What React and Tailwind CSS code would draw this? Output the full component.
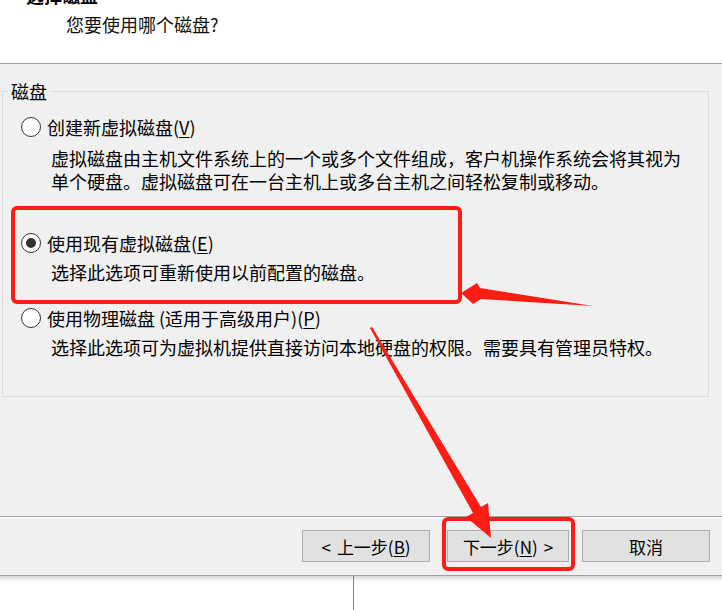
import React from "react";

const F = { fontFamily: '"Noto Sans CJK SC", "Noto Sans", sans-serif' };

function Radio({ checked }) {
  return (
    <div className="w-[20px] h-[20px] rounded-full border border-[#333333] bg-white flex items-center justify-center shrink-0">
      {checked && <div className="w-[10px] h-[10px] rounded-full bg-[#333333]" />}
    </div>
  );
}

function U({ children }) {
  return <span className="underline underline-offset-2">{children}</span>;
}

export default function App() {
  return (
    <div
      className="relative w-[722px] h-[610px] overflow-hidden bg-white text-black flex flex-col font-['Noto_Sans_CJK_SC',sans-serif]"
      style={F}
    >
      {/* header */}
      <div className="h-[63px] shrink-0 bg-white border-b border-[#a0a0a0] box-content">
        <div className="mt-[-17px] ml-[26px] text-[18px] leading-[24px] font-bold">选择磁盘</div>
        <div className="mt-[5px] ml-[66px] text-[18px] leading-[24px] text-[#111]">您要使用哪个磁盘?</div>
      </div>

      {/* main */}
      <div className="h-[452px] shrink-0 bg-[#f0f0f0] pt-[17px] px-[2px]">
        <fieldset className="w-[707px] border border-[#dcdcdc] pb-[37px] text-[18px]">
          <legend className="ml-[5px] px-[3px] leading-[20px]">磁盘</legend>

          <div className="mt-[14px] ml-[18px] flex items-center gap-[6px] h-[24px] leading-[24px]">
            <Radio />
            <span>创建新虚拟磁盘(<U>V</U>)</span>
          </div>
          <div className="mt-[8px] ml-[48px] leading-[23px] text-[18px]">
            <div>虚拟磁盘由主机文件系统上的一个或多个文件组成，客户机操作系统会将其视为</div>
            <div>单个硬盘。虚拟磁盘可在一台主机上或多台主机之间轻松复制或移动。</div>
          </div>

          <div className="mt-[38px] ml-[18px] flex items-center gap-[6px] h-[24px] leading-[24px]">
            <Radio checked />
            <span>使用现有虚拟磁盘(<U>E</U>)</span>
          </div>
          <div className="mt-[6px] ml-[48px] leading-[23px] text-[18px]">
            <div>选择此选项可重新使用以前配置的磁盘。</div>
          </div>

          <div className="mt-[22px] ml-[18px] flex items-center gap-[6px] h-[24px] leading-[24px]">
            <Radio />
            <span>使用物理磁盘 (适用于高级用户)(<U>P</U>)</span>
          </div>
          <div className="mt-[6px] ml-[48px] leading-[23px] text-[18px]">
            <div>选择此选项可为虚拟机提供直接访问本地硬盘的权限。需要具有管理员特权。</div>
          </div>
        </fieldset>
      </div>

      {/* footer */}
      <div className="h-[1px] bg-[#a0a0a0] shrink-0" />
      <div className="h-[1px] bg-white shrink-0" />
      <div className="h-[57px] shrink-0 bg-[#f0f0f0] border-b border-[#a0a0a0] box-content flex items-start justify-end">
        <div className="mt-[12px] flex pr-[12px] text-[17px]">
          <div className="w-[128px] h-[32px] bg-[#e1e1e1] border border-[#adadad] flex items-center justify-center leading-none gap-[6px]">
            <span>&lt;</span>
            <span>上一步(<U>B</U>)</span>
          </div>
          <div className="ml-[17px] w-[122px] h-[32px] bg-[#e1e1e1] border border-[#adadad] flex items-center justify-center leading-none gap-[6px]">
            <span>下一步(<U>N</U>)</span>
            <span>&gt;</span>
          </div>
          <div className="ml-[13px] w-[128px] h-[32px] bg-[#e1e1e1] border border-[#adadad] flex items-center justify-center leading-none">
            取消
          </div>
        </div>
      </div>
      <div className="flex-1 bg-gradient-to-b from-[#d8d8d8] via-white to-white bg-[length:100%_12px] bg-no-repeat flex">
        <div className="ml-[353px] w-[1px] h-full bg-[#808080]" />
      </div>

      {/* annotations */}
      <svg className="absolute inset-0 pointer-events-none" width="722" height="610" viewBox="0 0 722 610">
        <rect x="13" y="208" width="447" height="94" rx="4" fill="none" stroke="#fe1d14" strokeWidth="4" />
        <rect x="444" y="519" width="129" height="50" rx="4" fill="none" stroke="#fe1d14" strokeWidth="4" />
        <polygon points="461,293 477,283 480,288 593,306 481,299 473,304" fill="#fe1d14" />
        <polygon points="370,328 372,327 481,507 488,503 491,538 466,517 473,513" fill="#fe1d14" />
      </svg>
    </div>
  );
}
